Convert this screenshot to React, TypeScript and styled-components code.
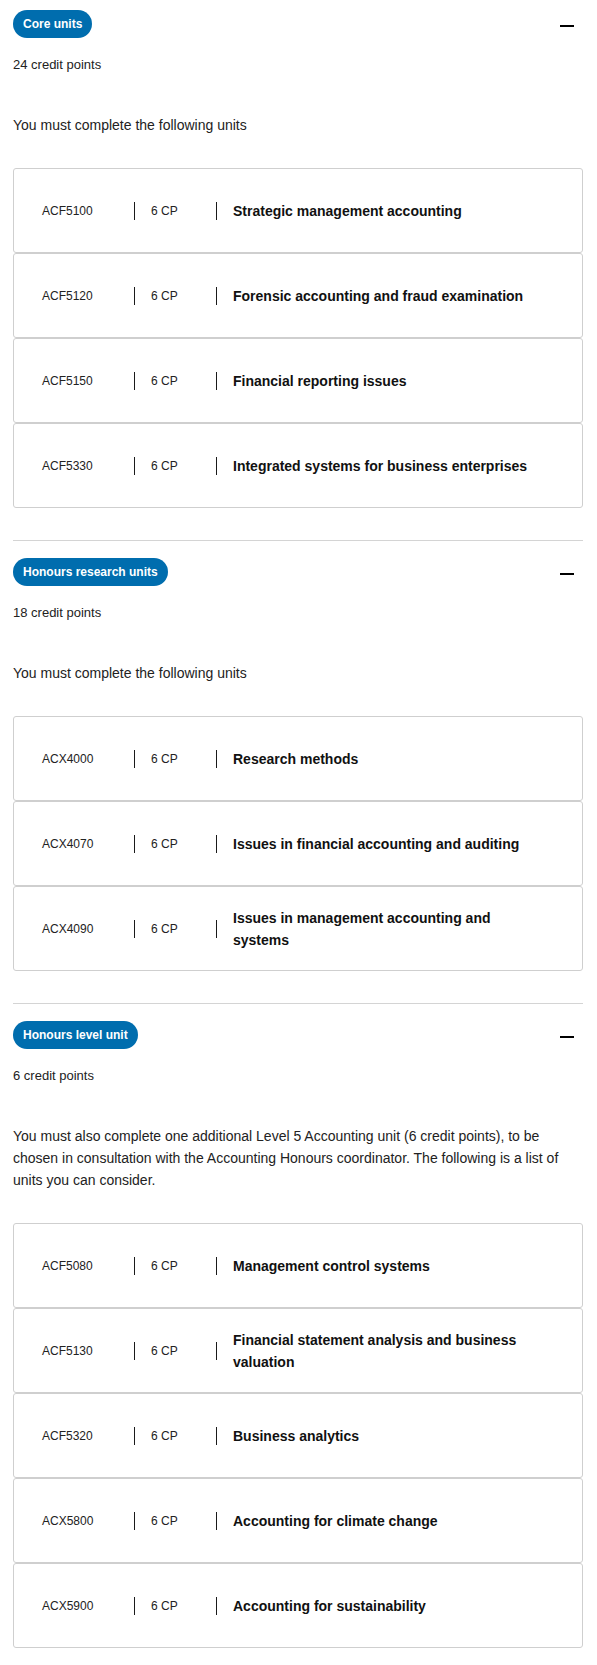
import React from "react";
import styled, { createGlobalStyle } from "styled-components";

const GlobalStyle = createGlobalStyle`
  *, *::before, *::after { box-sizing: border-box; }
  html, body { margin: 0; padding: 0; background: #ffffff; }
  body {
    font-family: "Liberation Sans", Arial, Helvetica, sans-serif;
    color: #222222;
  }
`;

type Unit = { code: string; cp: string; title: string };
type Group = { label: string; credits: string; intro: string; units: Unit[] };

const groups: Group[] = [
  {
    label: "Core units",
    credits: "24 credit points",
    intro: "You must complete the following units",
    units: [
      { code: "ACF5100", cp: "6 CP", title: "Strategic management accounting" },
      { code: "ACF5120", cp: "6 CP", title: "Forensic accounting and fraud examination" },
      { code: "ACF5150", cp: "6 CP", title: "Financial reporting issues" },
      { code: "ACF5330", cp: "6 CP", title: "Integrated systems for business enterprises" },
    ],
  },
  {
    label: "Honours research units",
    credits: "18 credit points",
    intro: "You must complete the following units",
    units: [
      { code: "ACX4000", cp: "6 CP", title: "Research methods" },
      { code: "ACX4070", cp: "6 CP", title: "Issues in financial accounting and auditing" },
      { code: "ACX4090", cp: "6 CP", title: "Issues in management accounting and systems" },
    ],
  },
  {
    label: "Honours level unit",
    credits: "6 credit points",
    intro:
      "You must also complete one additional Level 5 Accounting unit (6 credit points), to be chosen in consultation with the Accounting Honours coordinator. The following is a list of units you can consider.",
    units: [
      { code: "ACF5080", cp: "6 CP", title: "Management control systems" },
      { code: "ACF5130", cp: "6 CP", title: "Financial statement analysis and business valuation" },
      { code: "ACF5320", cp: "6 CP", title: "Business analytics" },
      { code: "ACX5800", cp: "6 CP", title: "Accounting for climate change" },
      { code: "ACX5900", cp: "6 CP", title: "Accounting for sustainability" },
    ],
  },
];

const Page = styled.main`
  padding: 0 14px 17px 13px;
`;

const Section = styled.section<{ $first?: boolean; $last?: boolean }>`
  padding-top: ${(p) => (p.$first ? "10px" : "17px")};
  padding-bottom: ${(p) => (p.$last ? "0" : "32px")};
  border-bottom: ${(p) => (p.$last ? "none" : "1px solid #d4d4d4")};
`;

const Header = styled.div`
  display: flex;
  justify-content: space-between;
  align-items: flex-start;
  height: 28px;
`;

const Pill = styled.span`
  display: inline-block;
  height: 28px;
  line-height: 28px;
  padding: 0 10px;
  border-radius: 14px;
  background: #006dae;
  color: #ffffff;
  font-size: 12px;
  font-weight: 700;
  white-space: nowrap;
`;

const Toggle = styled.button`
  display: flex;
  align-items: center;
  justify-content: center;
  width: 14px;
  height: 28px;
  margin-right: 9px;
  padding: 4px 0 0;
  border: none;
  background: none;
  cursor: pointer;
`;

const MinusBar = styled.span`
  display: block;
  width: 14px;
  height: 2px;
  background: #000000;
`;

const Credits = styled.p`
  margin: 18px 0 0;
  font-size: 13px;
  line-height: 18px;
  color: #222222;
`;

const Intro = styled.p`
  margin: 40px 0 0;
  font-size: 14px;
  line-height: 22px;
  color: #222222;
`;

const UnitList = styled.ul`
  list-style: none;
  margin: 32px 0 0;
  padding: 0;
`;

const UnitCard = styled.li`
  display: flex;
  align-items: center;
  min-height: 85px;
  padding: 0 0 0 28px;
  border: 1px solid #cfcfcf;
  border-radius: 3px;
  background: #ffffff;
`;

const Code = styled.span`
  flex: none;
  width: 92px;
  font-size: 12px;
  line-height: 18px;
  color: #222222;
`;

const Sep = styled.span`
  flex: none;
  width: 1px;
  height: 18px;
  background: #1a1a1a;
`;

const Points = styled.span`
  flex: none;
  width: 81px;
  padding-left: 16px;
  font-size: 12px;
  line-height: 18px;
  color: #222222;
`;

const Title = styled.span`
  flex: 0 1 auto;
  max-width: 321px;
  padding-left: 16px;
  font-size: 14px;
  font-weight: 700;
  line-height: 22px;
  color: #111111;
`;

export default function App() {
  return (
    <>
      <GlobalStyle />
      <Page>
        {groups.map((g, i) => (
          <Section key={g.label} $first={i === 0} $last={i === groups.length - 1}>
            <Header>
              <Pill>{g.label}</Pill>
              <Toggle aria-label="Collapse">
                <MinusBar />
              </Toggle>
            </Header>
            <Credits>{g.credits}</Credits>
            <Intro>{g.intro}</Intro>
            <UnitList>
              {g.units.map((u) => (
                <UnitCard key={u.code}>
                  <Code>{u.code}</Code>
                  <Sep />
                  <Points>{u.cp}</Points>
                  <Sep />
                  <Title>{u.title}</Title>
                </UnitCard>
              ))}
            </UnitList>
          </Section>
        ))}
      </Page>
    </>
  );
}
